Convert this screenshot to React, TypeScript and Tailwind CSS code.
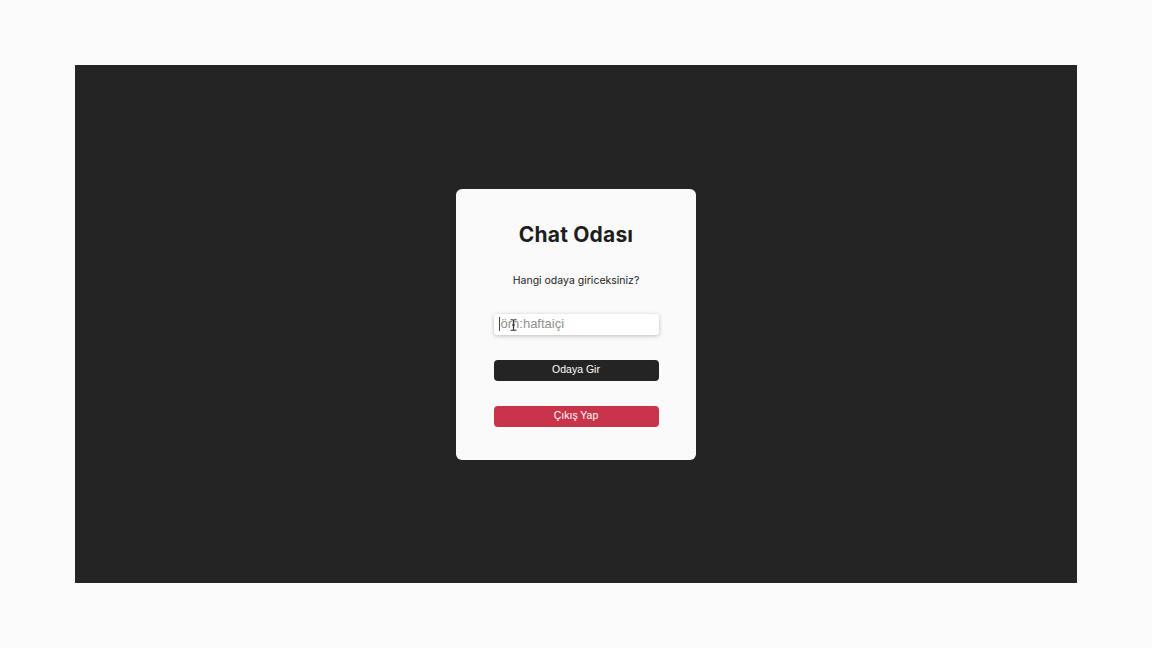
import React from "react";

function IBeam() {
  return (
    <svg className="absolute left-[16px] top-[5px]" width="7" height="12" viewBox="0 0 7 12" fill="none">
      <path d="M0.5 0.8 H2.5 Q3.5 0.8 3.5 1.8 V10.2 Q3.5 11.2 2.5 11.2 H0.5 M6.5 0.8 H4.5 Q3.5 0.8 3.5 1.8 M3.5 10.2 Q3.5 11.2 4.5 11.2 H6.5 M2 6 H5" stroke="#333" strokeWidth="1.1" />
    </svg>
  );
}

export default function App() {
  return (
    <div className="w-[1152px] h-[648px] bg-[#fbfbfb] px-[75px] py-[65px]">
      <div className="w-full h-full bg-[#242424] flex items-center justify-center">
        <div className="w-[240px] h-[271px] bg-[#fafafa] rounded-[6px] flex flex-col items-center pt-[33px] font-['Inter','Noto_Sans',sans-serif]">
          <h1 className="text-[21px] leading-[26px] font-bold text-[#1d1d1d] tracking-[0.2px]">
            Chat Odası
          </h1>
          <p className="mt-[26px] text-[10.5px] leading-[14px] text-[#222]">
            Hangi odaya giriceksiniz?
          </p>
          <div className="mt-[26px] w-[165px] h-[21px] bg-white rounded-[3px] shadow-[0_1px_4px_rgba(0,0,0,0.25)] flex items-center px-[5px] relative font-['Liberation_Sans',Arial,sans-serif]">
            <span className="w-px h-[14px] bg-[#444] mr-px" />
            <span className="text-[13px] text-[#8f8f8f]">örn:haftaiçi</span>
            <IBeam />
          </div>
          <button className="mt-[25px] w-[165px] h-[21px] bg-[#242424] rounded-[4px] text-white text-[10.5px] font-['Liberation_Sans',Arial,sans-serif]">
            Odaya Gir
          </button>
          <button className="mt-[25px] w-[165px] h-[21px] bg-[#c9344a] rounded-[4px] text-white text-[10.5px] font-['Liberation_Sans',Arial,sans-serif]">
            Çıkış Yap
          </button>
        </div>
      </div>
    </div>
  );
}
